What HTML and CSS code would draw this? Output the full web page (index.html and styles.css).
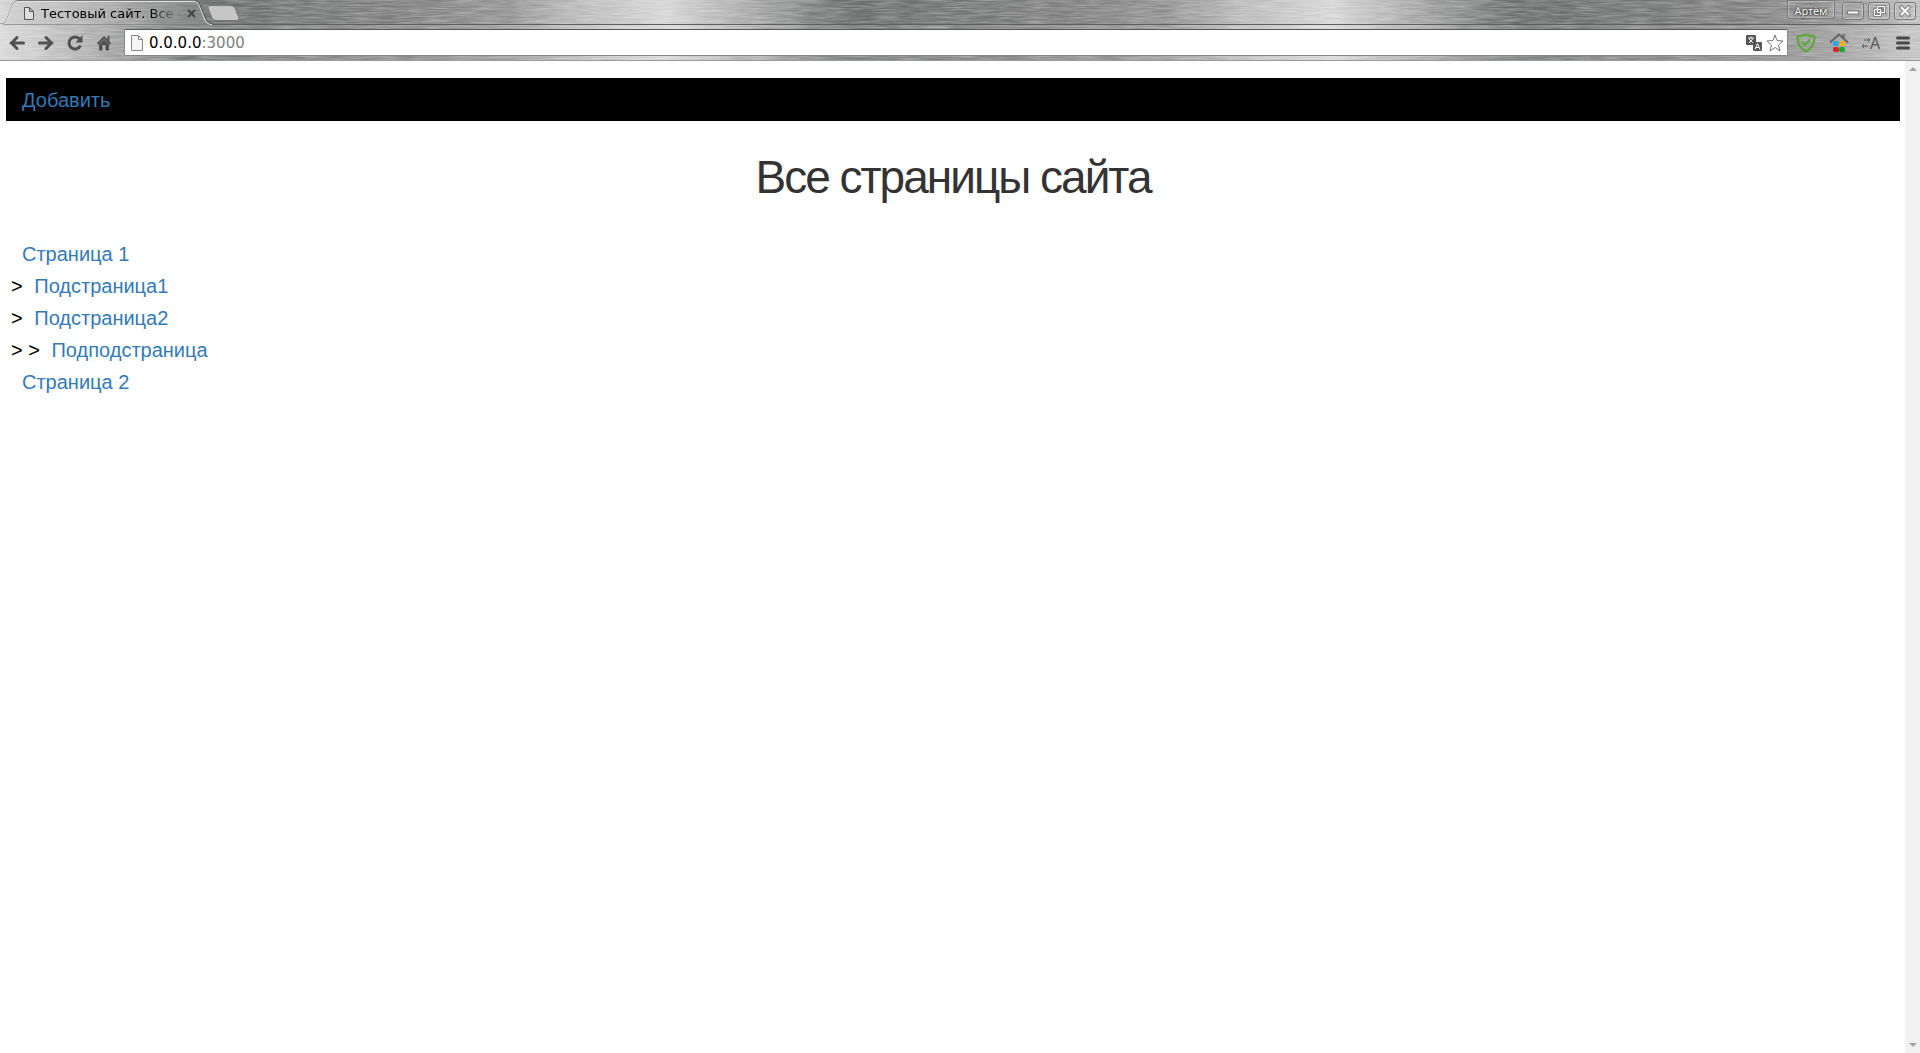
FILE: index.html
```html
<!DOCTYPE html>
<html lang="ru">
<head>
<meta charset="utf-8">
<title>Тестовый сайт. Все страницы</title>
<link rel="stylesheet" href="styles.css">
</head>
<body>
<div class="browser">
  <header class="chrome">
    <svg class="grain" aria-hidden="true">
      <filter id="brushed" x="0" y="0" width="100%" height="100%">
        <feTurbulence type="fractalNoise" baseFrequency="0.04 0.8" numOctaves="2" seed="4"/>
        <feColorMatrix values="0 0 0 0 1  0 0 0 0 1  0 0 0 0 1  2 0 0 0 -.6"/>
      </filter>
      <rect width="100%" height="100%" filter="url(#brushed)"/>
    </svg>
    <div class="tabs">
      <div class="tab">
        <svg class="tab-shape" viewBox="0 0 214 25" aria-hidden="true">
          <defs><linearGradient id="tabfill"><stop offset="0" stop-color="#d0d0d0"/><stop offset=".45" stop-color="#c4c4c4"/><stop offset="1" stop-color="#929492"/></linearGradient></defs>
          <path d="M0 25C5 25 6 23 7 20L13 5Q14 1 18 1H194Q198 1 199 5L205 20Q207 25 212 25Z" fill="url(#tabfill)" fill-opacity=".5"/>
          <path d="M0 24C5 24 6 22 7 19L13 4Q14 .5 18 .5H194" fill="none" stroke="#777"/>
          <path d="M0 24.500C5 24.500 6 23 7 20L13 5Q14 1.500 18 1.500H194Q198 1.500 199 5L205 20Q207 24.500 212 24.500" fill="none" stroke="#e4e4e4"/>
          <path d="M195 .5Q199 1 200 5L206 19Q208 23.500 213 24" fill="none" stroke="#555"/>
        </svg>
        <svg class="doc" viewBox="0 0 12 16" aria-hidden="true"><path d="M1.500 1.500H6.500L10.500 5.500V13.500H1.500ZM6.500 1.500V5.500H10.500" fill="#ddd" stroke="#555"/></svg>
        <span class="tab-title">Тестовый сайт. Все с</span>
        <button class="tab-close" aria-label="Закрыть вкладку"><svg viewBox="0 0 9 9"><path d="M1 1L8 8M8 1L1 8" stroke="#444" stroke-width="2"/></svg></button>
      </div>
      <button class="new-tab" aria-label="Новая вкладка"><svg viewBox="0 0 34 18"><path d="M4 1.500H25Q28 1.500 29 4L33 14Q33 16.500 31 16.500H10Q7 16.500 6 14L2 4Q1 2 4 1.500Z" fill="#c6c6c6" stroke="#777"/></svg></button>
      <div class="window-controls">
        <button class="user">Артём</button>
        <button class="win" aria-label="Свернуть"><svg viewBox="0 0 20 16"><path d="M4 9.500H16" stroke="#777" stroke-width="4"/><path d="M5 9.500H15" stroke="#fff" stroke-width="2"/></svg></button>
        <button class="win" aria-label="Восстановить"><svg viewBox="0 0 20 16"><path d="M8.500 3.500H15.500V9.500H8.500ZM5.500 6.500H11.500V12.500H5.500Z" fill="#888" stroke="#888" stroke-width="3"/><path d="M8.500 3.500H15.500V9.500H8.500ZM5.500 6.500H11.500V12.500H5.500Z" fill="#888" stroke="#fff"/></svg></button>
        <button class="win" aria-label="Закрыть"><svg viewBox="0 0 20 16"><path d="M5 3L15 13M15 3L5 13" stroke="#888" stroke-width="4"/><path d="M6 4L14 12M14 4L6 12" stroke="#fff" stroke-width="2"/></svg></button>
      </div>
    </div>
    <div class="toolbar">
      <div class="tools">
        <button class="tool" aria-label="Назад"><svg viewBox="0 0 16 16"><path d="M2 8H14.500M8 2.500L2.500 8L8 13.500" fill="none" stroke="#505050" stroke-width="3" stroke-linecap="round" stroke-linejoin="round"/></svg></button>
        <button class="tool" aria-label="Вперёд"><svg viewBox="0 0 16 16"><path d="M1.500 8H14M8 2.500L13.500 8L8 13.500" fill="none" stroke="#505050" stroke-width="3" stroke-linecap="round" stroke-linejoin="round"/></svg></button>
        <button class="tool" aria-label="Обновить"><svg viewBox="0 0 16 16"><path d="M12.500 4A6 6 0 1 0 13.500 10.500" fill="none" stroke="#505050" stroke-width="3"/><path d="M15.500 0V7.500H8.500Z" fill="#505050"/></svg></button>
        <button class="tool" aria-label="Домой"><svg viewBox="0 0 16 16"><path d="M1.500 9L8 2.500L14.500 9M12.500 1V6" fill="none" stroke="#505050" stroke-width="2"/><path d="M3 9.500L8 4.500L13 9.500V15.500H9.500V10H6.500V15.500H3Z" fill="#505050"/></svg></button>
      </div>
      <form class="address">
        <svg class="page" viewBox="0 0 12 16" aria-hidden="true"><path d="M.5 .5H7.500L11.500 4.500V15.500H.5ZM7.500 .5V4.500H11.500" fill="#f4f4f4" stroke="#888"/></svg>
        <div class="url" role="textbox" aria-label="Адрес" contenteditable="true">0.0.0.0<span class="port">:3000</span></div>
        <button type="button" class="inner" aria-label="Перевести"><svg viewBox="0 0 16 16"><rect width="10" height="10" rx="1" fill="#555"/><rect x="7" y="7" width="9" height="9" rx="1" fill="#555"/><path d="M2 3H8M5 1.500V3M3 8L7 3.500M3 4L7 8" stroke="#fff" fill="none"/><path d="M9 14.500L11.500 8.500L14 14.500M10 12.500H13" stroke="#fff" fill="none"/></svg></button>
        <button type="button" class="inner star" aria-label="В закладки"><svg viewBox="0 0 18 18"><path d="M9 1L11 6.500L17 7L12.500 11L14 17L9 13.500L4 17L5.500 11L1 7L7 6.500Z" fill="#fff" stroke="#777"/></svg></button>
      </form>
      <button class="ext" aria-label="Защита"><svg viewBox="0 0 20 20"><path d="M10 1.500Q14 3.500 18.500 3.500Q19 14 10 18.500Q1 14 1.500 3.500Q6 3.500 10 1.500Z" fill="none" stroke="#5a3" stroke-width="2"/><path d="M6 9L9 12L14 6.500" fill="none" stroke="#5a3" stroke-width="2"/></svg></button>
      <button class="ext" aria-label="Стартовая страница"><svg viewBox="0 0 20 20"><path d="M1 9.500L10 1.500L19 9.500M14.500 1V5" fill="none" stroke="#666" stroke-width="2"/><rect x="4" y="8" width="6" height="5" rx="2" fill="#2ae"/><rect x="10" y="8" width="6" height="5" rx="2" fill="#fa1"/><rect x="4" y="14" width="6" height="5" rx="2" fill="#d22"/><rect x="10" y="14" width="6" height="5" rx="2" fill="#1a3"/></svg></button>
      <button class="ext translit" aria-label="Транслитерация"><svg viewBox="0 0 8 12"><path d="M2 3H8M6 1L8 3L6 5M6 9H0M2 7L0 9L2 11" fill="none" stroke="#555"/></svg>A</button>
      <button class="ext menu" aria-label="Меню"><svg viewBox="0 0 14 14"><path d="M1.500 2H12.500M1.500 7H12.500M1.500 12H12.500" stroke="#484848" stroke-width="3" stroke-linecap="round"/></svg></button>
    </div>
  </header>
  <div class="viewport">
    <main class="page-body">
      <nav class="actions"><a href="#add">Добавить</a></nav>
      <h1>Все страницы сайта</h1>
      <ul class="tree">
        <li class="root"><a href="#p1">Страница 1</a></li>
        <li>&gt; <a href="#p1-1">Подстраница1</a></li>
        <li>&gt; <a href="#p1-2">Подстраница2</a></li>
        <li>&gt; &gt; <a href="#p1-2-1">Подподстраница</a></li>
        <li class="root"><a href="#p2">Страница 2</a></li>
      </ul>
    </main>
    <div class="scrollbar" aria-hidden="true">
      <svg viewBox="0 0 8 4"><path d="M0 4L4 0L8 4Z" fill="#a3a3a3"/></svg>
      <svg viewBox="0 0 8 4"><path d="M0 0L4 4L8 0Z" fill="#a3a3a3"/></svg>
    </div>
  </div>
</div>
</body>
</html>
```
FILE: styles.css
```css
* { box-sizing: border-box; }
body { margin: 0; background: #fff; font-family: "Liberation Sans", Arial, sans-serif; }
button { border: 0; padding: 0; margin: 0; background: none; color: inherit; font: inherit; }
svg { display: block; }
.browser { display: flex; flex-direction: column; min-height: 100vh; }

/* Brushed-metal window frame */
.chrome {
  position: relative;
  border-bottom: 1px solid #999;
  font-family: "DejaVu Sans", sans-serif;
  background: repeating-linear-gradient(90deg, #d4d4d4 0, #a8a8a8 80px, #666a68 185px, #727473 300px, #7c7c7c 400px, #8e8e8e 500px, #b8b8b8 580px, #d4d4d4 665px);
}
.grain { position: absolute; inset: 0; width: 100%; height: 100%; opacity: .3; }
.tabs { position: relative; display: flex; align-items: flex-start; height: 25px; border-bottom: 1px solid #5e605f; }
.tab { position: relative; display: flex; align-items: center; width: 206px; height: 25px; padding: 2px 10px 0 23px; }
.tab-shape { position: absolute; left: 0; top: 0; width: 214px; height: 25px; }
.doc { position: relative; width: 12px; height: 16px; flex: none; }
.tab-title {
  position: relative; flex: none; width: 140px; margin-left: 6px; white-space: nowrap;
  font-size: 13px; line-height: 20px; color: #000;
  mask-image: linear-gradient(90deg, #000 108px, transparent 140px);
}
.tab-close { position: relative; margin-left: 6px; }
.tab-close svg { width: 9px; height: 9px; }
.new-tab { position: relative; margin-top: 4px; }
.new-tab svg { width: 34px; height: 18px; }
.window-controls { display: flex; gap: 4px; margin-left: auto; padding-right: 4px; }
.user, .win { height: 18px; border: 1px solid #777; border-radius: 3px; box-shadow: inset 0 0 0 1px rgba(255, 255, 255, .3); }
.user {
  width: 48px; height: 19px; margin-right: 3px; padding-top: 2px; border-radius: 0 0 3px 3px;
  font-family: "Noto Sans", sans-serif; font-size: 11px; line-height: 16px; color: #fff;
  text-shadow: 0 0 1px #222, 0 0 2px #333, 0 0 2px #333;
}
.win { width: 22px; margin-top: 2px; }
.win svg { width: 20px; height: 16px; }

.toolbar {
  position: relative; display: flex; align-items: center; height: 35px; padding: 0 10px 0 9px;
  background: rgba(255, 255, 255, .12);
}
.tools { display: flex; gap: 12px; margin-right: 11px; }
.tool { width: 17px; }
.tool svg { width: 16px; height: 16px; }
.address {
  display: flex; align-items: center; flex: 1; height: 27px; margin-right: 8px; padding: 0 3px 0 6px;
  background: #fff; border: 1px solid #888; border-top-color: #555; border-radius: 2px;
}
.page { width: 12px; height: 16px; }
.url { flex: 1; padding-left: 6px; font-size: 15px; line-height: 24px; color: #000; outline: 0; }
.port { color: #808080; }
.inner svg { width: 16px; height: 16px; }
.inner.star { margin-left: 4px; }
.star svg { width: 18px; height: 18px; }
.ext { margin-right: 13px; }
.ext svg { width: 20px; height: 20px; }
.ext.translit { display: flex; align-items: center; margin-right: 16px; color: #555; font-family: "Open Sans", sans-serif; font-size: 16px; line-height: 20px; }
.ext.translit svg { width: 8px; height: 12px; }
.ext.menu { margin-right: 0; }
.ext.menu svg { width: 14px; height: 14px; }

/* Site content */
.viewport { display: flex; flex: 1; }
.page-body { flex: 1; padding: 17px 5px 0 6px; font-size: 20px; line-height: 32px; }
.actions { background: #000; height: 43px; padding: 6px 16px; }
a { color: #337ab7; text-decoration: none; }
h1 { margin: 28px 0 0; font-size: 46px; line-height: 57px; font-weight: 400; letter-spacing: -2px; text-align: center; color: #333; }
.tree { list-style: none; margin: 32px 0 0; padding: 0 5px; color: #000; }
.tree a { margin-left: 6px; }
.tree .root { padding-left: 5px; }
.scrollbar { display: flex; flex-direction: column; justify-content: space-between; align-items: center; width: 15px; padding: 6px 0; background: #f1f1f1; }
.scrollbar svg { width: 8px; height: 4px; }
```
